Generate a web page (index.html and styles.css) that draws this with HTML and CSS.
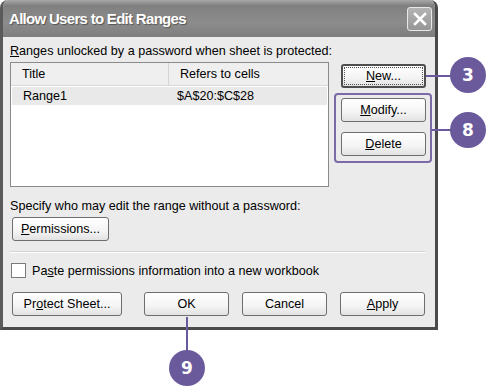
FILE: index.html
```html
<!DOCTYPE html>
<html>
    <head>
        <title>Allow Users to Edit Ranges</title>
        <link rel="stylesheet" href="styles.css">
    </head>
    <body>
        <div class="page">
            <div class="dialog">
                <div class="titlebar">
                    <span class="caption">Allow Users to Edit Ranges</span>
                    <span class="close">
                        <svg width="16" height="16" viewBox="0 0 16 16">
                            <path d="M3 3 L13 13 M13 3 L3 13" stroke="white" stroke-width="2.6" stroke-linecap="square"/>
                        </svg>
                    </span>
                </div>

                <div class="content">
                    <p class="label"><u>R</u>anges unlocked by a password when sheet is protected:</p>

                    <div class="main">
                        <div class="list">
                            <div class="list-head">
                                <span class="col-title">Title</span>
                                <span class="col-refs">Refers to cells</span>
                            </div>
                            <div class="list-row">
                                <span class="col-title">Range1</span>
                                <span class="col-refs">$A$20:$C$28</span>
                            </div>
                        </div>

                        <div class="side">
                            <button class="btn default"><span class="focus"><u>N</u>ew...</span></button>
                            <div class="group">
                                <button class="btn"><u>M</u>odify...</button>
                                <button class="btn"><u>D</u>elete</button>
                            </div>
                        </div>
                    </div>

                    <p class="label spec">Specify who may edit the range without a password:</p>
                    <button class="btn wide"><u>P</u>ermissions...</button>

                    <div class="separator"></div>

                    <label class="check">
                        <span class="box"></span>
                        <span>Pa<u>s</u>te permissions information into a new workbook</span>
                    </label>

                    <div class="footer">
                        <button class="btn protect">Pr<u>o</u>tect Sheet...</button>
                        <div class="actions">
                            <button class="btn">OK</button>
                            <button class="btn">Cancel</button>
                            <button class="btn"><u>A</u>pply</button>
                        </div>
                    </div>
                </div>
            </div>

            <!-- callouts -->
            <div class="line line-3"></div>
            <div class="marker marker-3">3</div>
            <div class="line line-8"></div>
            <div class="marker marker-8">8</div>
            <div class="line line-9"></div>
            <div class="marker marker-9">9</div>
        </div>
    </body>
</html>
```

FILE: styles.css
```css
body {
    background-color: white;
    margin: 0;
}

.page {
    height: 387px;
    position: relative;
    width: 500px;
}

.dialog {
    background-color: #ebebeb;
    border-bottom: 3px solid #4a4a4a;
    border-left: 3px solid #5a5a5a;
    border-radius: 8px 8px 0 0;
    border-right: 3px solid #4a4a4a;
    box-sizing: border-box;
    color: black;
    font-family: "Liberation Sans", Arial, sans-serif;
    font-size: 12.6px;
    height: 330px;
    overflow: hidden;
    width: 438px;
}

.titlebar {
    align-items: center;
    background: linear-gradient(#a8a8a8, #808080 15%, #8c8c8c 60%, #7e7e7e);
    display: flex;
    height: 37px;
    justify-content: space-between;
    margin: 0 -3px;
    padding: 0 6px 0 9px;
}

.caption {
    color: white;
    font-family: "Liberation Sans", Arial, sans-serif;
    font-size: 15px;
    font-weight: bold;
    letter-spacing: -0.7px;
    text-shadow: 1px 1px 1px #555;
}

.close {
    align-items: center;
    background: linear-gradient(#b4b4b4, #969696);
    border: 1px solid #e8e8e8;
    border-radius: 3px;
    display: flex;
    height: 22px;
    justify-content: center;
    width: 23px;
}

.content {
    padding: 6px 10px 0 7px;
}

.label {
    line-height: 16px;
    margin: 0;
}

.main {
    display: flex;
    gap: 12px;
    margin-top: 3px;
}

.list {
    background-color: white;
    border: 1px solid #8a8a8a;
    flex-shrink: 0;
    height: 123px;
    width: 317px;
}

.list-head {
    background-color: #efefef;
    border-bottom: 1px solid #d8d8d8;
    display: flex;
    height: 22px;
    line-height: 22px;
}

.list-head .col-title {
    border-right: 1px solid #d4d4d4;
}

.list-row {
    background-color: #e9e9e9;
    display: flex;
    height: 18px;
    line-height: 18px;
    margin: 1px 1px 0 1px;
}

.col-title {
    box-sizing: border-box;
    padding-left: 11px;
    width: 158px;
}

.list-head .col-refs {
    padding-left: 11px;
}

.list-row .col-refs {
    padding-left: 7px;
}

.side {
    display: flex;
    flex-direction: column;
    padding-top: 2px;
    width: 85px;
}

.group {
    border: 2px solid #7b6aa8;
    border-radius: 4px;
    display: flex;
    flex-direction: column;
    gap: 10px;
    margin: 5px -6px 0 -7px;
    padding: 3px 5px 5px 5px;
}

.btn {
    background: linear-gradient(#ffffff, #f4f4f4 60%, #e2e2e2);
    border: 1px solid #6e6e6e;
    border-radius: 3px;
    color: black;
    flex-shrink: 0;
    font-family: "Liberation Sans", Arial, sans-serif;
    font-size: 12.6px;
    height: 24px;
    padding: 0;
    width: 85px;
}

.default {
    border: 2px solid #4e4e4e;
    padding: 1px;
}

.focus {
    align-items: center;
    border: 1px dotted #555;
    box-sizing: border-box;
    display: flex;
    height: 100%;
    justify-content: center;
    width: 100%;
}

.spec {
    margin-top: 11px;
}

.wide {
    margin: 3px 0 0 2px;
    width: 97px;
}

.separator {
    border-top: 1px solid #d2d2d2;
    border-bottom: 1px solid white;
    margin: 10px 0 0 0;
}

.check {
    align-items: center;
    display: flex;
    gap: 6px;
    margin: 10px 0 0 1px;
}

.box {
    background-color: white;
    border: 1px solid #7a7a7a;
    height: 13px;
    width: 13px;
}

.footer {
    display: flex;
    justify-content: space-between;
    margin-top: 14px;
    padding: 0 0 0 2px;
}

.protect {
    width: 110px;
}

.actions {
    display: flex;
    gap: 13px;
}

.marker {
    background-color: #6a5a9c;
    border-radius: 50%;
    color: white;
    font-family: "DejaVu Sans", sans-serif;
    font-size: 17px;
    font-weight: bold;
    height: 36px;
    line-height: 36px;
    position: absolute;
    text-align: center;
    width: 36px;
}

.line {
    background-color: #6a5a9c;
    position: absolute;
}

.marker-3 {
    left: 450px;
    top: 57px;
}

.marker-8 {
    left: 450px;
    top: 112px;
}

.marker-9 {
    left: 169px;
    top: 350px;
}

.line-3 {
    height: 2px;
    left: 426px;
    top: 75px;
    width: 26px;
}

.line-8 {
    height: 2px;
    left: 432px;
    top: 129px;
    width: 20px;
}

.line-9 {
    height: 34px;
    left: 186px;
    top: 317px;
    width: 2px;
}
```
